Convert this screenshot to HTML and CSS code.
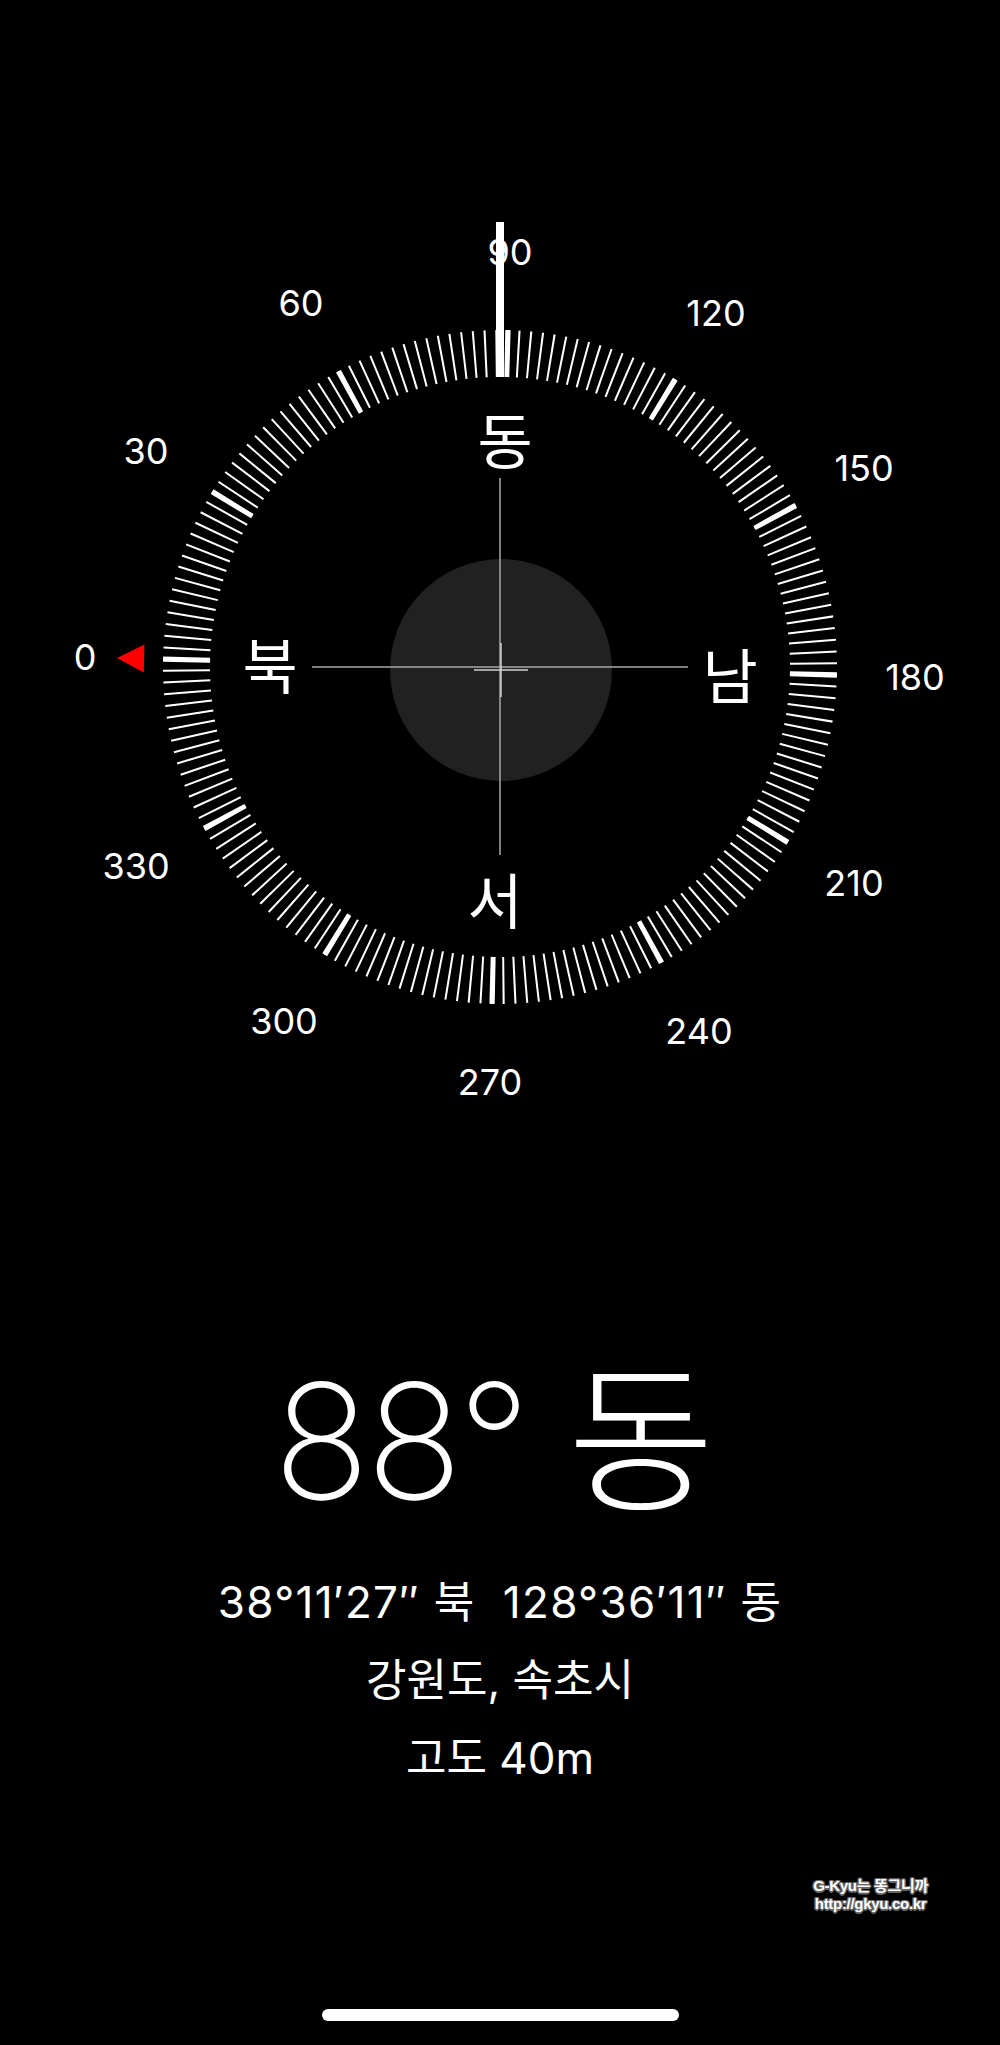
FILE: index.html
```html
<!DOCTYPE html>
<html lang="ko">
<head>
  <meta charset="UTF-8">
  <meta name="viewport" content="width=device-width, initial-scale=1.0">
  <title>나침반</title>
  <link rel="stylesheet" href="styles.css">
</head>
<body>
  <main class="screen">

    <!-- 나침반 다이얼 (88.65도 회전) -->
    <section class="compass">
      <svg class="dial" viewBox="0 0 1000 1160" width="1000" height="1160">
        <!-- 눈금: 2도마다 가는 선, 30도마다 굵은 선 -->
        <g transform="rotate(-178.65 500 667)">
          <circle class="ticks-minor" cx="500" cy="667" r="313.5" pathLength="360"/>
          <circle class="ticks-major" cx="500" cy="667" r="313.5" pathLength="360"/>
        </g>

        <!-- 북쪽 표시 -->
        <g transform="rotate(-88.65 500 667)">
          <path class="north-mark" d="M500 284 L486 311 L514 311 Z"/>
        </g>

        <!-- 각도 숫자 -->
        <g class="degrees">
          <text x="85" y="657">0</text>
          <text x="146" y="451">30</text>
          <text x="301" y="303">60</text>
          <text x="510" y="252">90</text>
          <text x="716" y="313">120</text>
          <text x="864" y="468">150</text>
          <text x="915" y="677">180</text>
          <text x="854" y="883">210</text>
          <text x="699" y="1031">240</text>
          <text x="490" y="1082">270</text>
          <text x="284" y="1021">300</text>
          <text x="136" y="866">330</text>
        </g>

        <!-- 방위 -->
        <g class="cardinals">
          <text x="270" y="662">북</text>
          <text x="505" y="437">동</text>
          <text x="730" y="672">남</text>
          <text x="495" y="897">서</text>
        </g>

        <!-- 수평계 -->
        <circle class="bubble" cx="501" cy="670" r="111"/>
        <path class="cross" d="M500 478 V855 M312 667 H688"/>
        <path class="level" d="M474 670 H528 M501 643 V697"/>

        <!-- 현재 방향선 -->
        <rect class="heading-line" x="496" y="222" width="8" height="155"/>
      </svg>
    </section>

    <!-- 방향 / 위치 정보 -->
    <section class="readout">
      <div class="heading">88° 동</div>
      <div class="info-line coords">38°11′27″ 북&nbsp; 128°36′11″ 동</div>
      <div class="info-line">강원도, 속초시</div>
      <div class="info-line">고도 40m</div>
    </section>

    <div class="watermark">G-Kyu는 똥그니까<br>http://gkyu.co.kr</div>

    <div class="home-bar"></div>
  </main>
</body>
</html>
```
FILE: styles.css
```css
/* 기본 */
body {
  margin: 0;
  padding: 0;
  background: #000000;
  font-family: "Inter", "Noto Sans CJK KR", sans-serif;
  color: #ffffff;
}

.screen {
  width: 1000px;
  height: 2045px;
  display: flex;
  flex-direction: column;
  overflow: hidden;
}

/* 다이얼 */
.compass {
  height: 1160px;
}

.dial {
  display: block;
}

.ticks-minor,
.ticks-major {
  fill: none;
  stroke: #ffffff;
  stroke-width: 47;
}

.ticks-minor {
  stroke-dasharray: 0.37 1.63;
  stroke-dashoffset: 0.185;
}

.ticks-major {
  stroke-dasharray: 0.95 29.05;
  stroke-dashoffset: 0.475;
}

.north-mark {
  fill: #ff0000;
}

.degrees text {
  fill: #ffffff;
  font-family: "Inter", sans-serif;
  font-size: 36px;
  text-anchor: middle;
  dominant-baseline: central;
}

.cardinals text {
  fill: #ffffff;
  font-family: "Noto Sans CJK KR", sans-serif;
  font-size: 60px;
  text-anchor: middle;
  dominant-baseline: central;
}

.bubble {
  fill: #212121;
}

.cross {
  stroke: #a8a8a8;
  stroke-width: 1.5;
  fill: none;
}

.level {
  stroke: #d0d0d0;
  stroke-width: 1.5;
  fill: none;
}

.heading-line {
  fill: #ffffff;
}

/* 정보 */
.readout {
  display: flex;
  flex-direction: column;
  align-items: center;
}

.heading {
  margin-top: 201px;
  margin-right: 16px;
  height: 160px;
  font-size: 160px;
  line-height: 160px;
  font-weight: 200;
  letter-spacing: -4px;
}

.info-line {
  height: 78px;
  font-size: 44px;
  line-height: 78px;
}

.coords {
  margin-top: 42px;
  letter-spacing: 1.3px;
}

/* 워터마크 */
.watermark {
  align-self: flex-end;
  margin-top: 80px;
  margin-right: 72px;
  font-family: "Liberation Sans", "Noto Sans CJK KR", sans-serif;
  font-size: 15px;
  font-weight: bold;
  line-height: 18px;
  text-align: center;
  letter-spacing: -0.3px;
  text-shadow: 1px 1px 0 #666, -1px -1px 0 #666, 1px -1px 0 #666, -1px 1px 0 #666,
    0 1.5px 0 #666, 0 -1.5px 0 #666, 1.5px 0 0 #666, -1.5px 0 0 #666;
}

/* 홈 인디케이터 */
.home-bar {
  align-self: center;
  width: 357px;
  height: 12px;
  margin-top: 96px;
  border-radius: 6px;
  background: #ffffff;
}
```
